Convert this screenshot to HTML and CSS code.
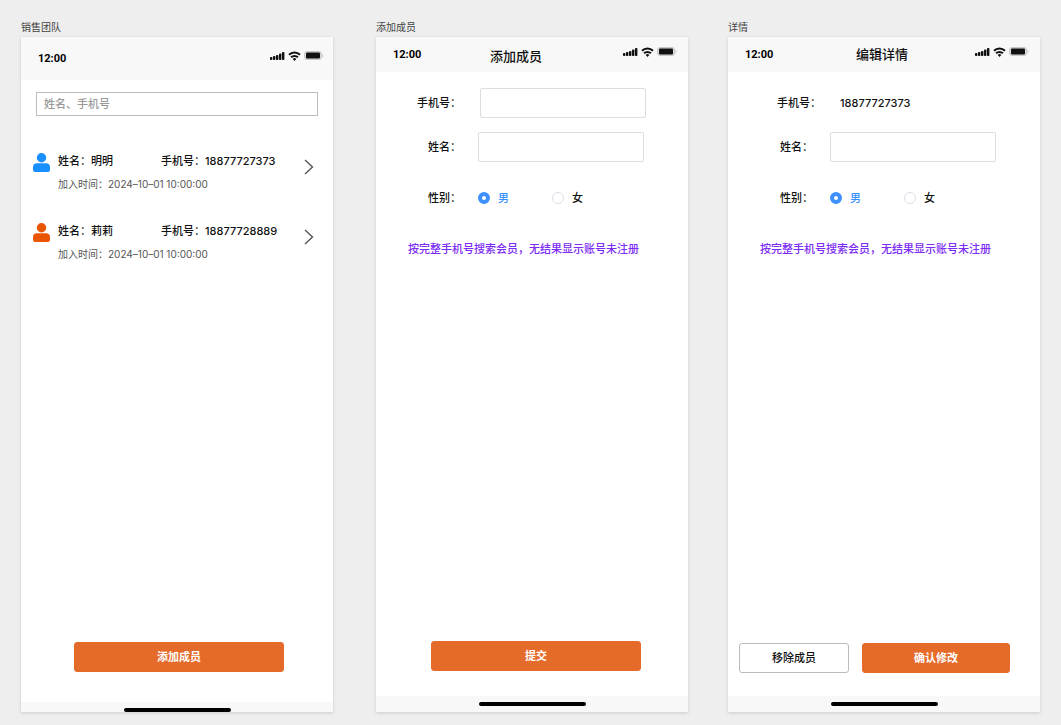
FILE: index.html
```html
<!DOCTYPE html>
<html lang="zh-CN">
	<head>
		<meta charset="utf-8">
		<title>销售团队</title>
		<link rel="stylesheet" href="styles.css">
	</head>
	<body>
		<svg class="sprite" aria-hidden="true">
			<symbol id="status" viewBox="0 0 54 12">
				<rect x="0" y="7" width="2.4" height="3" rx=".8"/>
				<rect x="3" y="6" width="2.4" height="4" rx=".8"/>
				<rect x="6" y="5" width="2.4" height="5" rx=".8"/>
				<rect x="9" y="3.500" width="2.4" height="6.500" rx=".8"/>
				<rect x="12" y="2" width="2.4" height="8" rx=".8"/>
				<g fill="none" stroke="currentColor" stroke-width="2">
					<path d="M19 4.800a7.800 7.800 0 0 1 11 0"/>
					<path d="M21.100 7.300a4.800 4.800 0 0 1 6.800 0"/>
				</g>
				<path d="M22.700 8.900a2.600 2.600 0 0 1 3.600 0L24.500 11z"/>
				<rect x="34.500" y="1.500" width="17" height="8" rx="2.500" fill="#ddd" stroke="#c8c8c8"/>
				<rect x="36" y="2.500" width="14" height="6" rx="1"/>
				<path d="M52.500 4v3.500c1.300-.4 1.300-3.100 0-3.500z" fill="#c4c4c4"/>
			</symbol>
			<symbol id="user" viewBox="0 0 17 19">
				<circle cx="8.500" cy="4.700" r="4.700"/>
				<path d="M4 10.300h9a4 4 0 0 1 4 4v2.700a2 2 0 0 1-2 2H2a2 2 0 0 1-2-2v-2.700a4 4 0 0 1 4-4z"/>
			</symbol>
			<symbol id="arrow" viewBox="0 0 10 16">
				<path d="M1 1l7.500 7L1 15" fill="none" stroke="currentColor" stroke-width="1.400"/>
			</symbol>
		</svg>

		<div class="screen screen-list">
			<h2>销售团队</h2>
			<div class="phone">
				<div class="top">
					<span class="time">12:00</span>
					<svg class="status"><use href="#status"/></svg>
				</div>
				<input class="search" type="text" placeholder="姓名、手机号" aria-label="姓名、手机号">
				<ul class="members">
					<li>
						<a href="#">
							<svg class="user blue"><use href="#user"/></svg>
							<span class="name">姓名：明明</span>
							<span class="mobile">手机号：18877727373</span>
							<span class="joined">加入时间：2024–10–01 10:00:00</span>
							<svg class="arrow"><use href="#arrow"/></svg>
						</a>
					</li>
					<li>
						<a href="#">
							<svg class="user orange"><use href="#user"/></svg>
							<span class="name">姓名：莉莉</span>
							<span class="mobile">手机号：18877728889</span>
							<span class="joined">加入时间：2024–10–01 10:00:00</span>
							<svg class="arrow"><use href="#arrow"/></svg>
						</a>
					</li>
				</ul>
				<div class="buttons">
					<button class="primary" type="button">添加成员</button>
				</div>
				<div class="home"></div>
			</div>
		</div>

		<div class="screen screen-add">
			<h2>添加成员</h2>
			<div class="phone">
				<div class="top">
					<span class="time">12:00</span>
					<h1>添加成员</h1>
					<svg class="status"><use href="#status"/></svg>
				</div>
				<form>
					<div class="field mobile-field">
						<label for="add-mobile">手机号：</label>
						<input id="add-mobile" type="text">
					</div>
					<div class="field">
						<label for="add-name">姓名：</label>
						<input id="add-name" type="text">
					</div>
					<div class="field gender" role="radiogroup" aria-labelledby="add-gender">
						<span class="caption" id="add-gender">性别：</span>
						<label class="option"><input type="radio" name="add-sex" checked><span>男</span></label>
						<label class="option"><input type="radio" name="add-sex"><span>女</span></label>
					</div>
					<p class="note">按完整手机号搜索会员，无结果显示账号未注册</p>
				</form>
				<div class="buttons">
					<button class="primary" type="button">提交</button>
				</div>
				<div class="home"></div>
			</div>
		</div>

		<div class="screen screen-edit">
			<h2>详情</h2>
			<div class="phone">
				<div class="top">
					<span class="time">12:00</span>
					<h1>编辑详情</h1>
					<svg class="status"><use href="#status"/></svg>
				</div>
				<form>
					<div class="field mobile-field">
						<span class="caption">手机号：</span>
						<span class="value">18877727373</span>
					</div>
					<div class="field">
						<label for="edit-name">姓名：</label>
						<input id="edit-name" type="text">
					</div>
					<div class="field gender" role="radiogroup" aria-labelledby="edit-gender">
						<span class="caption" id="edit-gender">性别：</span>
						<label class="option"><input type="radio" name="edit-sex" checked><span>男</span></label>
						<label class="option"><input type="radio" name="edit-sex"><span>女</span></label>
					</div>
					<p class="note">按完整手机号搜索会员，无结果显示账号未注册</p>
				</form>
				<div class="buttons">
					<button class="plain" type="button">移除成员</button>
					<button class="primary" type="button">确认修改</button>
				</div>
				<div class="home"></div>
			</div>
		</div>
	</body>
</html>
```
FILE: styles.css
```css
* {
	box-sizing: border-box;
}
body {
	display: flex;
	gap: 40px;
	min-height: 100vh;
	margin: 0;
	padding: 20px 21px 13px;
	background: #eeeeee;
	color: #111;
	font: 500 11px/16px Inter, "Noto Sans CJK SC", sans-serif;
}
h1, h2, p, ul {
	margin: 0;
	padding: 0;
}
input, button {
	font: inherit;
	color: inherit;
}
.sprite {
	display: none;
}
svg {
	flex: none;
	fill: currentColor;
}

/* Screens */
.screen {
	display: flex;
	flex: 1;
	flex-direction: column;
	min-width: 0;
}
.screen-list {
	margin-right: 3px;
}
.screen h2 {
	height: 17px;
	color: #444;
	font-size: 10px;
	font-weight: 400;
	line-height: 15px;
}
.phone {
	display: flex;
	flex: 1;
	flex-direction: column;
	background: #fff;
	box-shadow: 0 1px 3px rgba(0, 0, 0, 0.15);
}
.top {
	display: flex;
	align-items: center;
	height: 35px;
	padding: 0 11px 0 17px;
	background: #f8f8f8;
}
.screen-list .top {
	height: 43px;
	padding-right: 9px;
}
.time {
	width: 29px;
	color: #000;
	font-family: Roboto, sans-serif;
	font-weight: 700;
}
.top h1 {
	font-size: 13px;
	font-weight: 500;
	line-height: 18px;
}
.screen-add h1 {
	margin-left: 68px;
	padding-top: 3px;
}
.screen-edit h1 {
	margin-left: 82px;
	padding-bottom: 1px;
}
.status {
	width: 54px;
	height: 12px;
	margin: 0 0 5px auto;
}

/* Member list */
.search {
	height: 24px;
	margin: 12px 15px 0;
	padding: 0 7px;
	border: 1px solid #bbb;
	background: #fff;
}
.search::placeholder {
	color: #999;
	opacity: 1;
}
.members {
	margin-top: 37px;
	list-style: none;
}
.members li {
	height: 70px;
}
.members a {
	display: grid;
	grid-template-columns: 25px 103px 1fr 10px;
	row-gap: 7px;
	padding: 0 19px 0 12px;
	color: inherit;
	text-decoration: none;
}
.user {
	width: 17px;
	height: 19px;
	margin-bottom: -3px;
}
.blue {
	color: #1890ff;
}
.orange {
	color: #ea5504;
}
.members .name, .members .mobile, .user {
	grid-row: 1;
}
.joined {
	grid-column: 2 / span 2;
	grid-row: 2;
	color: #555;
	font-size: 10px;
	font-weight: 400;
}
.arrow {
	grid-column: 4;
	grid-row: 1 / span 2;
	width: 10px;
	height: 16px;
	margin-top: 6px;
	color: #555;
}

/* Forms */
form {
	padding-top: 16px;
}
.field {
	display: flex;
	align-items: center;
	gap: 17px;
	height: 30px;
	margin-bottom: 14px;
	padding-right: 44px;
}
.field > label, .caption {
	flex: none;
	width: 85px;
	text-align: right;
}
.field input[type=text] {
	flex: 1;
	min-width: 0;
	height: 30px;
	padding: 0 8px;
	border: 1px solid #ddd;
	border-radius: 2px;
	background: #fff;
}
.mobile-field {
	gap: 19px;
	padding-right: 42px;
}
.screen-edit .mobile-field {
	padding-left: 8px;
}
.gender {
	margin: 21px 0 28px;
}
.field > .option {
	display: flex;
	align-items: center;
	gap: 8px;
	width: 57px;
	text-align: left;
}
.option input {
	width: 12px;
	height: 12px;
	margin: 0;
	border: 1px solid #dcdfe6;
	border-radius: 50%;
	background: #fff;
	appearance: none;
}
.option input:checked {
	border: 4px solid #3c91ff;
}
.option input:checked + span {
	color: #3c91ff;
}
.note {
	padding-left: 32px;
	color: #7b2cf5;
}

/* Bottom of the screen */
.buttons {
	display: flex;
	gap: 13px;
	margin-top: auto;
	padding: 0 47px 25px 55px;
}
.buttons button {
	flex: 1;
	height: 30px;
	padding: 0;
	border: 1px solid #e56b2b;
	border-radius: 3px;
}
.buttons .primary {
	background: #e56b2b;
	color: #fff;
	font-weight: 700;
}
.screen-list .buttons {
	padding: 0 49px 30px 53px;
}
.screen-edit .buttons {
	padding: 0 30px 23px 11px;
}
.buttons .plain {
	flex: none;
	width: 110px;
	border-color: #bbb;
	background: #fff;
}
.home {
	height: 16px;
	padding-top: 6px;
	background: #f8f8f8;
}
.home::before {
	display: block;
	width: 107px;
	height: 4px;
	margin: 0 auto;
	border-radius: 2px;
	background: #000;
	content: "";
}
.screen-list .home {
	height: 10px;
}
```
